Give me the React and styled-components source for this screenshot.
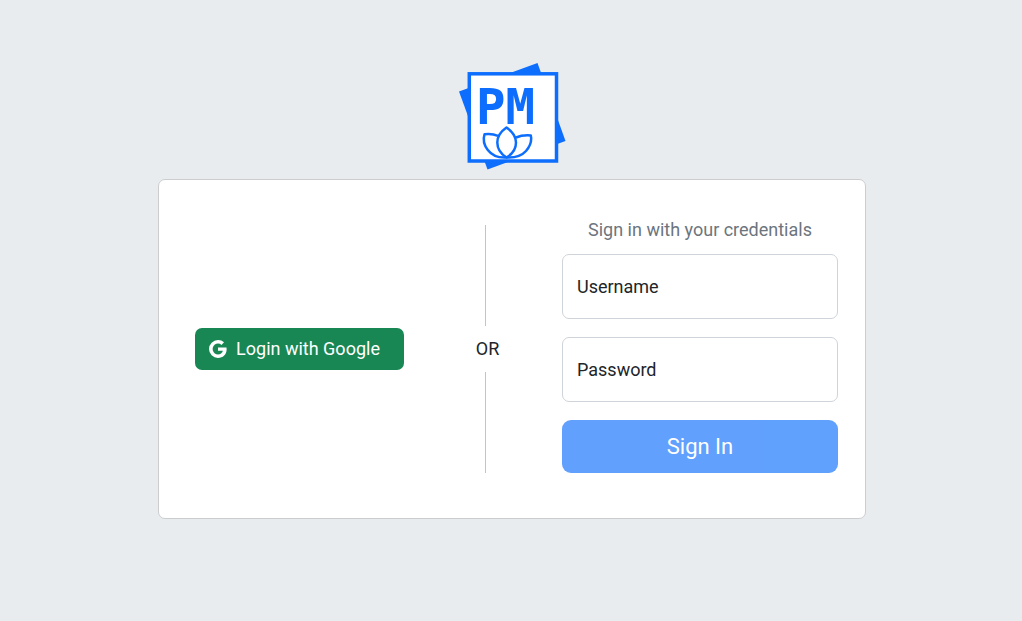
import React, { useState } from "react";
import styled, { createGlobalStyle } from "styled-components";
import { BsGoogle } from "react-icons/bs";

const GlobalStyle = createGlobalStyle`
  *, *::before, *::after { box-sizing: border-box; }
  body {
    margin: 0;
    background: #e9ecef;
    color: #212529;
    font: 400 18px/27px Roboto, "Liberation Sans", sans-serif;
  }
`;

const Page = styled.main`
  display: flex;
  flex-direction: column;
  align-items: center;
  gap: 9px;
  padding: 62px 12px 36px 14px;
`;

const Logo = styled.svg`
  display: block;
  width: 108px;
  height: 108px;
`;

const LogoText = styled.text`
  fill: #0d6efd;
  font: 700 49px "DejaVu Sans Mono", monospace;
`;

const Card = styled.section`
  display: grid;
  grid-template-columns: 227fr 149fr 276fr;
  width: 100%;
  max-width: 708px;
  padding: 36px 27px 45px;
  background: #fff;
  border: 1px solid #cccdce;
  border-radius: 7px;
`;

const Provider = styled.div`
  display: flex;
  align-items: center;
  justify-content: center;
  padding-top: 9px;
`;

const GoogleButton = styled.button`
  display: flex;
  align-items: center;
  gap: 9px;
  height: 42px;
  padding: 7px 24px 8px 14px;
  border: 0;
  border-radius: 7px;
  background: #198754;
  color: #fff;
  font: inherit;
  white-space: nowrap;
  cursor: pointer;
`;

const Divider = styled.div`
  display: flex;
  flex-direction: column;
  align-items: center;
  gap: 10px;
  padding-top: 9px;
  line-height: 26px;
`;

const Rule = styled.span`
  flex: 1;
  width: 6px;
  border-left: 1px solid #c4c4c4;
`;

const Form = styled.form`
  display: flex;
  flex-direction: column;
  gap: 18px;
`;

const Heading = styled.h1`
  margin: 0 0 -7px;
  color: #6c757d;
  font: inherit;
  text-align: center;
`;

const Field = styled.div`
  position: relative;
`;

const Input = styled.input`
  display: block;
  width: 100%;
  height: 65px;
  padding: 26px 14px 8px;
  border: 1px solid #ced4da;
  border-radius: 7px;
  background: #fff;
  color: inherit;
  font: inherit;
`;

const Label = styled.label`
  position: absolute;
  top: 19px;
  left: 15px;
  pointer-events: none;

  ${Input}:focus + &,
  ${Input}:not(:placeholder-shown) + & {
    top: 4px;
    font-size: 14px;
    opacity: 0.65;
  }
`;

const SubmitButton = styled.button`
  height: 53px;
  border: 0;
  border-radius: 9px;
  background: #0d6efd;
  color: #fff;
  font: inherit;
  font-size: 22px;

  &:disabled {
    opacity: 0.65;
  }
`;

function TextField({ id, label, ...rest }) {
  return (
    <Field>
      <Input id={id} name={id} placeholder=" " {...rest} />
      <Label htmlFor={id}>{label}</Label>
    </Field>
  );
}

export default function App() {
  const [username, setUsername] = useState("");
  const [password, setPassword] = useState("");

  return (
    <>
      <GlobalStyle />
      <Page>
        <Logo viewBox="0 0 108 108" role="img" aria-label="PM">
          <path d="M79.500 1L107.500 79L29.500 107.500L1 29.500Z" fill="#0d6efd" />
          <rect x="11.300" y="11.800" width="87.200" height="87.200" fill="#fff" stroke="#0d6efd" strokeWidth="3.500" />
          <LogoText x="18" y="62">PM</LogoText>
          <g fill="none" stroke="#0d6efd" strokeWidth="2.500" strokeLinejoin="round">
            <path d="M48.500 65.500C42 70 39.300 75 39.300 80.500C39.300 87 43 92 48.500 95.500C54.500 92 58 87 58 80.500C58 75 55 70 48.500 65.500Z" />
            <path d="M40 73.800C36 72.200 31 71.800 26.500 72.300C25 77 26 83 29.800 88C34 93.500 41 96 48.500 95.500" />
            <path d="M58 75.500C63 73.300 68 73 72.800 73.400C74 79 72 84.500 68 89C63.500 94 56.500 96 48.500 95.500" />
          </g>
        </Logo>
        <Card>
          <Provider>
            <GoogleButton type="button">
              <BsGoogle size={18} aria-hidden="true" />
              Login with Google
            </GoogleButton>
          </Provider>
          <Divider>
            <Rule />
            OR
            <Rule />
          </Divider>
          <Form onSubmit={(e) => e.preventDefault()}>
            <Heading>Sign in with your credentials</Heading>
            <TextField
              id="username"
              label="Username"
              type="text"
              autoComplete="username"
              value={username}
              onChange={(e) => setUsername(e.target.value)}
            />
            <TextField
              id="password"
              label="Password"
              type="password"
              autoComplete="current-password"
              value={password}
              onChange={(e) => setPassword(e.target.value)}
            />
            <SubmitButton type="submit" disabled={!username || !password}>
              Sign In
            </SubmitButton>
          </Form>
        </Card>
      </Page>
    </>
  );
}
